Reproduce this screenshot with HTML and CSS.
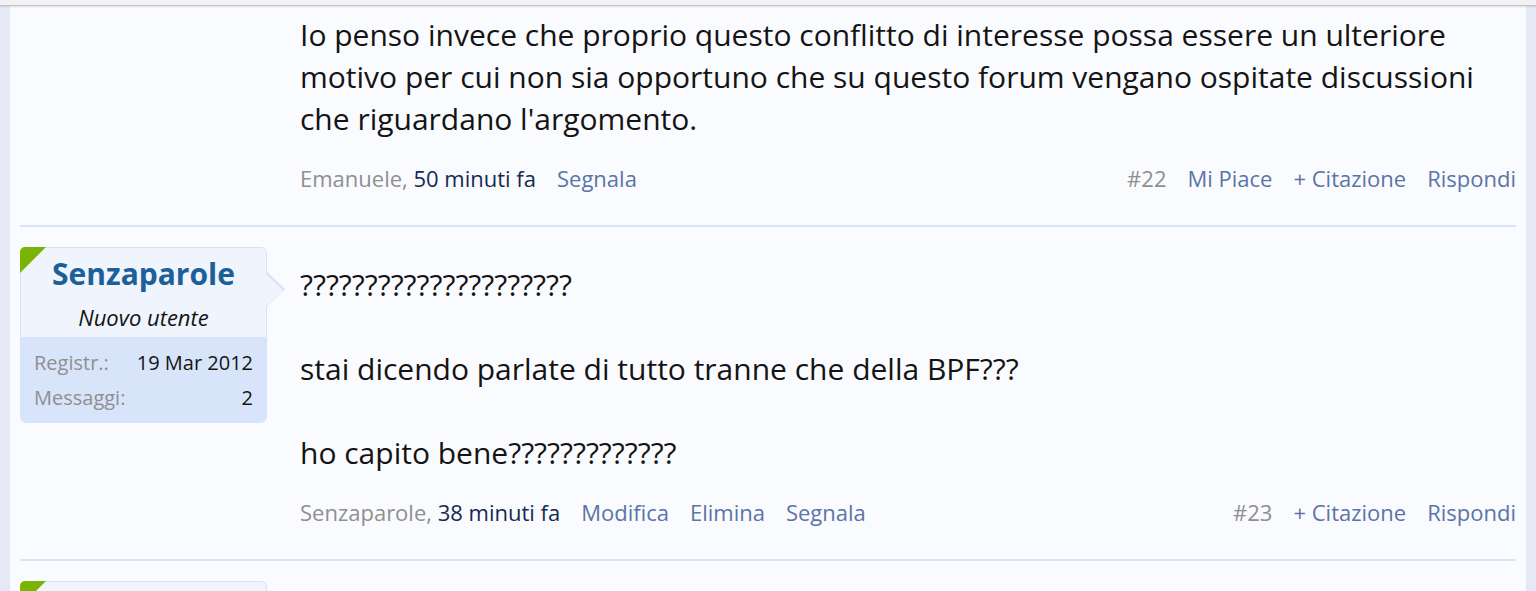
FILE: index.html
```html
<!DOCTYPE html>
<html lang="it">
<head>
    <meta charset="UTF-8">
    <meta name="viewport" content="width=device-width, initial-scale=1.0">
    <title>Discussione</title>
    <link rel="stylesheet" href="styles.css">
</head>
<body>
    <div class="topbar"></div>

    <div class="page">
        <!-- messaggio #22 -->
        <div class="post first">
            <div class="user"></div>
            <div class="message">
                <div class="text">
                    Io penso invece che proprio questo conflitto di interesse possa essere un ulteriore
                    motivo per cui non sia opportuno che su questo forum vengano ospitate discussioni
                    che riguardano l'argomento.
                </div>
                <div class="meta">
                    <div class="meta-left">
                        <span class="author">Emanuele, <span class="date">50 minuti fa</span></span>
                        <a href="#">Segnala</a>
                    </div>
                    <div class="meta-right">
                        <span class="num">#22</span>
                        <a href="#">Mi Piace</a>
                        <a href="#">+ Citazione</a>
                        <a href="#">Rispondi</a>
                    </div>
                </div>
            </div>
        </div>

        <!-- messaggio #23 -->
        <div class="post">
            <div class="user">
                <div class="card">
                    <span class="arrow"></span>
                    <div class="name">Senzaparole</div>
                    <div class="title">Nuovo utente</div>
                    <div class="stats">
                        <div class="row"><span class="label">Registr.:</span><span>19 Mar 2012</span></div>
                        <div class="row"><span class="label">Messaggi:</span><span>2</span></div>
                    </div>
                </div>
            </div>
            <div class="message">
                <div class="text">
                    ?????????????????????<br><br>
                    stai dicendo parlate di tutto tranne che della BPF???<br><br>
                    ho capito bene?????????????
                </div>
                <div class="meta">
                    <div class="meta-left">
                        <span class="author">Senzaparole, <span class="date">38 minuti fa</span></span>
                        <a href="#">Modifica</a>
                        <a href="#">Elimina</a>
                        <a href="#">Segnala</a>
                    </div>
                    <div class="meta-right">
                        <span class="num">#23</span>
                        <a href="#">+ Citazione</a>
                        <a href="#">Rispondi</a>
                    </div>
                </div>
            </div>
        </div>

        <!-- messaggio successivo -->
        <div class="post">
            <div class="user">
                <div class="card">
                    <span class="arrow"></span>
                    <div class="name">&nbsp;</div>
                    <div class="title">&nbsp;</div>
                </div>
            </div>
            <div class="message"></div>
        </div>
    </div>
</body>
</html>
```

FILE: styles.css
```css
body {
    margin: 0;
    background-color: #e4e9f5;
    font-family: 'Open Sans', sans-serif;
    color: #141414;
    overflow: hidden;
}

.topbar {
    height: 5px;
    background-color: #f2f2f2;
    border-bottom: 1px solid #c6c6c6;
    box-shadow: 0 1px 2px rgba(0, 0, 0, 0.12);
    position: relative;
}

.page {
    margin: 0 10px;
    padding: 0 10px;
    background-color: #fafbfe;
}

.post {
    display: flex;
    gap: 33px;
    padding: 20px 0 34px;
    border-bottom: 2px solid #d8e3f7;
}

.post.first {
    padding-top: 0;
}

.user {
    width: 247px;
    flex-shrink: 0;
}

.card {
    position: relative;
    background-color: #eff4fd;
    border: 1px solid #d6e2f7;
    border-radius: 6px;
    text-align: center;
}

/* angolo verde */
.card::before {
    content: "";
    position: absolute;
    top: -1px;
    left: -1px;
    border-top: 26px solid #79b404;
    border-right: 26px solid transparent;
    border-top-left-radius: 5px;
}

/* freccia verso il messaggio */
.arrow {
    position: absolute;
    top: 24px;
    right: -19px;
    width: 18px;
    height: 35px;
}

.arrow::before,
.arrow::after {
    content: "";
    position: absolute;
    width: 0;
    height: 0;
}

.arrow::before {
    left: 0;
    top: 0;
    border-top: 17.5px solid transparent;
    border-bottom: 17.5px solid transparent;
    border-left: 18px solid #d6e2f7;
}

.arrow::after {
    left: -1px;
    top: 1.5px;
    border-top: 16px solid transparent;
    border-bottom: 16px solid transparent;
    border-left: 17px solid #eff4fd;
}

.name {
    font-weight: bold;
    font-size: 30px;
    line-height: 36px;
    color: #1d5f98;
    padding-top: 8px;
}

.title {
    font-style: italic;
    font-size: 22px;
    line-height: 30px;
    padding: 10px 0 5px;
}

.stats {
    background-color: #d8e4f9;
    border-radius: 0 0 6px 6px;
    padding: 12px 13px 10px 13px;
    display: flex;
    flex-direction: column;
    gap: 7px;
    font-size: 20px;
    line-height: 28px;
}

.row {
    display: flex;
    justify-content: space-between;
}

.label {
    color: #8f8f8f;
}

.message {
    flex: 1;
    padding-top: 17px;
}

.post.first .message {
    padding-top: 8px;
}

.text {
    font-size: 30px;
    line-height: 42px;
}

.meta {
    display: flex;
    justify-content: space-between;
    margin-top: 25px;
    font-size: 22px;
    line-height: 26px;
}

.meta-left,
.meta-right {
    display: flex;
    gap: 21px;
}

.author {
    color: #8f8f8f;
}

.date {
    color: #142a52;
}

.num {
    color: #8f8f8f;
}

a {
    color: #5a74a7;
    text-decoration: none;
}
```
